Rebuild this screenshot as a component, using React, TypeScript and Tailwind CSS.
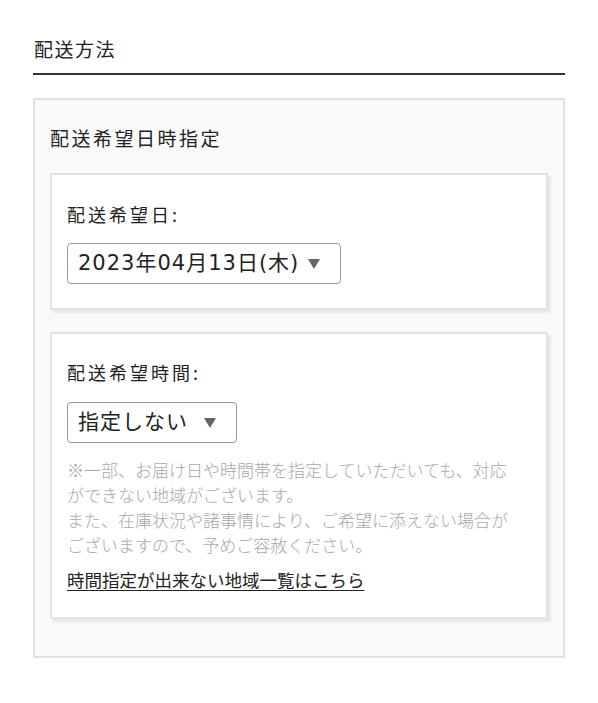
import React from "react";

const FONT = '"Noto Sans CJK JP", "Noto Sans", sans-serif';
const SELECT_FONT = '"DejaVu Sans", "Noto Sans CJK JP", sans-serif';

function Select({ value, width }: { value: string; width: string }) {
  return (
    <div
      className={`flex h-[41px] items-center justify-between rounded-[4px] border border-[#999] bg-white pl-[10px] pr-[20px] ${width}`}
    >
      <span className="text-[21px] leading-none tracking-[1px] text-[#222]" style={{ fontFamily: SELECT_FONT }}>
        {value}
      </span>
      <svg width="12" height="10" viewBox="0 0 12 10" className="shrink-0">
        <path d="M0 0 L12 0 L6 10 Z" fill="#666" />
      </svg>
    </div>
  );
}

export default function App() {
  return (
    <div className="min-h-[703px] w-[598px] bg-white px-[33px] pt-[36px]" style={{ fontFamily: FONT }}>
      <h2 className="border-b-2 border-[#333] pb-[11px] pl-[1px] text-[19px] leading-[26px] tracking-[1.5px] text-[#222]">
        配送方法
      </h2>

      <div className="mt-[23px] border-2 border-[#e2e2e2] bg-[#f9f9f9] px-[15px] pb-[37px] pt-[25px]">
        <h3 className="text-[19px] leading-[26px] tracking-[2.5px] text-[#222]">配送希望日時指定</h3>

        <div className="mt-[22px] border-2 border-[#e2e2e2] bg-white px-[15px] pb-[24px] pt-[27px] shadow-[3px_3px_2px_rgba(0,0,0,0.07)]">
          <p className="text-[18px] leading-[24px] tracking-[3px] text-[#222]">配送希望日:</p>
          <div className="mt-[17px]">
            <Select value="2023年04月13日(木)" width="w-[274px]" />
          </div>
        </div>

        <div className="mt-[22px] border-2 border-[#e2e2e2] bg-white px-[15px] pb-[25px] pt-[26px] shadow-[3px_3px_2px_rgba(0,0,0,0.07)]">
          <p className="text-[18px] leading-[24px] tracking-[3px] text-[#222]">配送希望時間:</p>
          <div className="mt-[18px]">
            <Select value="指定しない" width="w-[170px]" />
          </div>
          <p className="mt-[14px] whitespace-nowrap text-[17px] font-light leading-[25px] text-[#a8a8a8]">
            ※一部、お届け日や時間帯を指定していただいても、対応
            <br />
            ができない地域がございます。
            <br />
            また、在庫状況や諸事情により、ご希望に添えない場合が
            <br />
            ございますので、予めご容赦ください。
          </p>
          <a href="#" className="mt-[11px] block text-[17.5px] leading-[24px] text-[#222] underline underline-offset-[3px]">
            時間指定が出来ない地域一覧はこちら
          </a>
        </div>
      </div>
    </div>
  );
}
